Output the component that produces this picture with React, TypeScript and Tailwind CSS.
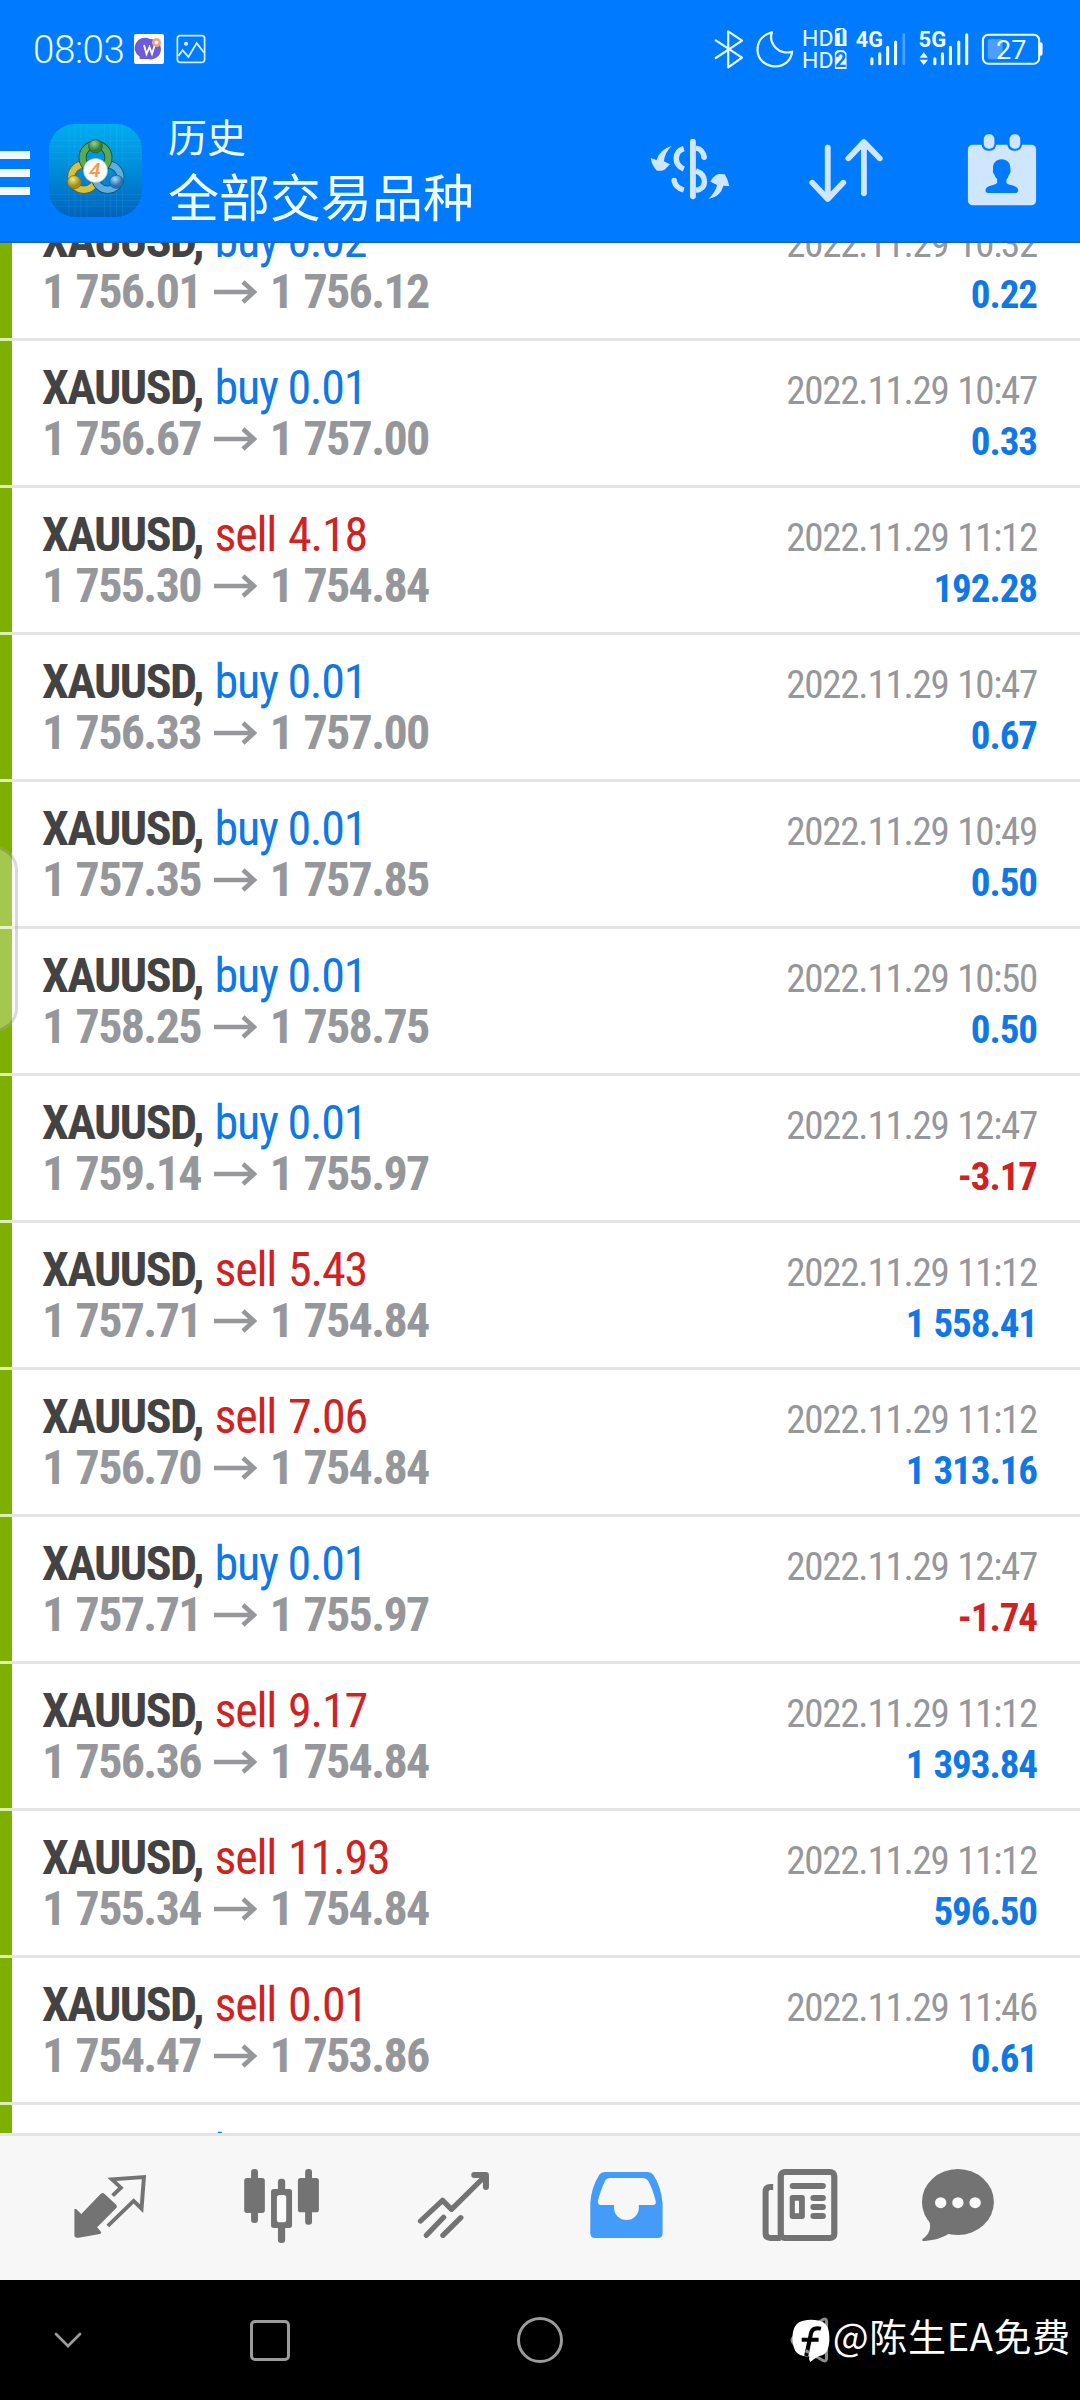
import React from "react";

type Trade = {
  side: "buy" | "sell";
  volume: string;
  open: string;
  close: string;
  time: string;
  profit: string;
};

const trades: Trade[] = [
  { side: "buy", volume: "0.02", open: "1 756.01", close: "1 756.12", time: "2022.11.29 10:32", profit: "0.22" },
  { side: "buy", volume: "0.01", open: "1 756.67", close: "1 757.00", time: "2022.11.29 10:47", profit: "0.33" },
  { side: "sell", volume: "4.18", open: "1 755.30", close: "1 754.84", time: "2022.11.29 11:12", profit: "192.28" },
  { side: "buy", volume: "0.01", open: "1 756.33", close: "1 757.00", time: "2022.11.29 10:47", profit: "0.67" },
  { side: "buy", volume: "0.01", open: "1 757.35", close: "1 757.85", time: "2022.11.29 10:49", profit: "0.50" },
  { side: "buy", volume: "0.01", open: "1 758.25", close: "1 758.75", time: "2022.11.29 10:50", profit: "0.50" },
  { side: "buy", volume: "0.01", open: "1 759.14", close: "1 755.97", time: "2022.11.29 12:47", profit: "-3.17" },
  { side: "sell", volume: "5.43", open: "1 757.71", close: "1 754.84", time: "2022.11.29 11:12", profit: "1 558.41" },
  { side: "sell", volume: "7.06", open: "1 756.70", close: "1 754.84", time: "2022.11.29 11:12", profit: "1 313.16" },
  { side: "buy", volume: "0.01", open: "1 757.71", close: "1 755.97", time: "2022.11.29 12:47", profit: "-1.74" },
  { side: "sell", volume: "9.17", open: "1 756.36", close: "1 754.84", time: "2022.11.29 11:12", profit: "1 393.84" },
  { side: "sell", volume: "11.93", open: "1 755.34", close: "1 754.84", time: "2022.11.29 11:12", profit: "596.50" },
  { side: "sell", volume: "0.01", open: "1 754.47", close: "1 753.86", time: "2022.11.29 11:46", profit: "0.61" },
  { side: "buy", volume: "0.01", open: "1 754.47", close: "1 753.86", time: "2022.11.29 11:46", profit: "0.61" },
];

function Icon({ box, className, children }: { box: string; className: string; children: React.ReactNode }) {
  return (
    <svg viewBox={box} preserveAspectRatio="none" className={"shrink-0 " + className} fill="none">
      {children}
    </svg>
  );
}

function StatusBar() {
  return (
    <div className="flex h-[98px] items-center justify-between pl-[33px] pr-[35px]">
      <div className="flex items-center">
        <span className="w-[101px] pt-[2px] text-[38.500px] leading-none font-[350] tracking-[-0.4px] whitespace-nowrap text-[#effaff] [font-stretch:92%]">
          08:03
        </span>
        <Icon box="0 0 30 30" className="h-[30px] w-[30px]">
          <rect width="30" height="30" rx="2" fill="#fff" />
          <path d="M16 5a10.2 10.2 0 1 1-2 20H7q-3 0-1-2A10.2 10.2 0 0 1 16 5Z" fill="#6d5bdc" />
          <circle cx="22.500" cy="8.500" r="4.500" fill="#e8a58c" />
          <circle cx="22.500" cy="8.500" r="1.800" fill="#fff" />
          <path d="M10 11l2.500 9 3-7 2.500 7 2.500-8" stroke="#fff" strokeWidth="1.800" />
        </Icon>
        <Icon box="511 102 87 89" className="ml-[12px] h-[30px] w-[30px]">
          <rect x="515" y="107" width="79" height="79" rx="8" stroke="#d6efff" strokeWidth="5" />
          <path d="M518 167l12-17 17 20 24-41 21 28" stroke="#d6efff" strokeWidth="5.500" />
          <circle cx="540" cy="131" r="6" fill="#d6efff" />
        </Icon>
      </div>
      <div className="flex items-center">
        <Icon box="500 81 110 132" className="h-[44px] w-[38px]">
          <path d="M508 121L584 173L544 202V94L584 122L508 174" stroke="#e6f8ff" strokeWidth="6.500" strokeLinecap="round" strokeLinejoin="round" />
        </Icon>
        <Icon box="610 81 140 132" className="h-[44px] w-[48px]">
          <path
            d="M671 97C640 105 629 128 629 150C629 180 654 199 681 199C707 199 727 182 730 155C715 160 695 158 682 143C670 130 666 112 671 97Z"
            stroke="#e6f8ff"
            strokeWidth="6.500"
            strokeLinejoin="round"
          />
        </Icon>
        <Icon box="750 81 155 132" className="h-[44px] w-[53px]">
          <g fontFamily="Roboto" fill="#effaff">
            <text x="759" y="137" fontSize="65" textLength="92" lengthAdjust="spacingAndGlyphs">HD</text>
            <text x="759" y="205" fontSize="65" textLength="92" lengthAdjust="spacingAndGlyphs">HD</text>
            <path d="M861 84h20l8 8v46h-34V90zM861 151h20l8 8v48h-34v-50z" />
          </g>
          <g fontFamily="Roboto" fontWeight="700" fill="#007aff" fontSize="58" textAnchor="middle">
            <text x="871" y="133">1</text>
            <text x="872" y="200">2</text>
          </g>
        </Icon>
        <Icon box="905 81 175 132" className="h-[44px] w-[60px]">
          <text x="916" y="141" fontFamily="Roboto" fontWeight="700" fontSize="64" fill="#effaff" textLength="79" lengthAdjust="spacingAndGlyphs">
            4G
          </text>
          <path d="M963 176v15M986 161v30M1009 142v49M1032 126v65" stroke="#effaff" strokeWidth="9" strokeLinecap="round" />
          <path d="M1056 104v87" stroke="#4da3ff" strokeWidth="8" strokeLinecap="round" />
        </Icon>
        <Icon box="1080 81 182 132" className="h-[44px] w-[63px]">
          <text x="1099" y="141" fontFamily="Roboto" fontWeight="700" fontSize="64" fill="#effaff" textLength="80" lengthAdjust="spacingAndGlyphs">
            5G
          </text>
          <path d="M1102 173l12-16 12 16zM1102 179l12 16 12-16z" fill="#effaff" />
          <path d="M1146 176v15M1168 161v30M1191 142v49M1215 126v65M1238 104v87" stroke="#effaff" strokeWidth="9" strokeLinecap="round" />
        </Icon>
        <Icon box="1262 81 203 132" className="h-[44px] w-[70px]">
          <rect x="1285" y="104" width="163" height="87" rx="16" stroke="#effaff" strokeWidth="6" />
          <path d="M1449 127h3q6 0 6 6v28q0 6-6 6h-3z" fill="#effaff" />
          <rect x="1299" y="117" width="43" height="61" rx="6" fill="#4d9fff" />
          <text x="1323" y="178" fontFamily="Roboto" fontSize="80" fill="#effaff" textLength="88" lengthAdjust="spacingAndGlyphs">
            27
          </text>
        </Icon>
      </div>
    </div>
  );
}

function AppLogo() {
  return (
    <Icon box="28 43 280 280" className="h-[93px] w-[93px]">
      <defs>
        <linearGradient id="tile" x1="0" y1="0" x2="0" y2="1">
          <stop offset="0" stopColor="#00aef0" />
          <stop offset="0.450" stopColor="#008fdc" />
          <stop offset="1" stopColor="#0063bd" />
        </linearGradient>
        <radialGradient id="green" cx="0.400" cy="0.300">
          <stop offset="0" stopColor="#9bd08a" />
          <stop offset="1" stopColor="#2e7d3c" />
        </radialGradient>
        <radialGradient id="gold" cx="0.400" cy="0.300">
          <stop offset="0" stopColor="#f4e98a" />
          <stop offset="1" stopColor="#a58c16" />
        </radialGradient>
        <radialGradient id="sky" cx="0.400" cy="0.300">
          <stop offset="0" stopColor="#a9dcf8" />
          <stop offset="1" stopColor="#2474b4" />
        </radialGradient>
      </defs>
      <rect x="28" y="43" width="280" height="280" rx="78" fill="url(#tile)" />
      <path
        d="M88 43v280M106 43v280M124 43v280M142 43v280M195 43v280M213 43v280M231 43v280M249 43v280M28 93h280M28 111h280M28 129h280M28 147h280M28 255h280M28 273h280M28 291h280"
        stroke="#5cc8ff"
        strokeOpacity="0.200"
        strokeWidth="2"
      />
      <circle cx="133" cy="203" r="38" stroke="#6b6412" strokeWidth="24" />
      <circle cx="133" cy="203" r="38" stroke="#d3c246" strokeWidth="19" />
      <circle cx="205" cy="203" r="38" stroke="#174f80" strokeWidth="24" />
      <circle cx="205" cy="203" r="38" stroke="#5eaede" strokeWidth="19" />
      <circle cx="168" cy="144" r="39" stroke="#1c5227" strokeWidth="24" />
      <circle cx="168" cy="144" r="39" stroke="#58a958" strokeWidth="19" />
      <ellipse cx="168" cy="110" rx="21" ry="20" fill="url(#green)" stroke="#245c30" strokeWidth="2" />
      <ellipse cx="104" cy="218" rx="21" ry="20" fill="url(#gold)" stroke="#71651a" strokeWidth="2" />
      <ellipse cx="231" cy="217" rx="21" ry="20" fill="url(#sky)" stroke="#205a8b" strokeWidth="2" />
      <circle cx="168" cy="183" r="36" fill="#fbfaf7" stroke="#b8c4c4" strokeWidth="2" />
      <text x="166" y="204" textAnchor="middle" fontFamily="Roboto" fontStyle="italic" fontWeight="500" fontSize="62" fill="#f0994f">
        4
      </text>
    </Icon>
  );
}

function Header() {
  return (
    <header className="h-[243px] shrink-0 border-b-2 border-[#0f68c9] bg-[#007aff]">
      <StatusBar />
      <div className="flex h-[143px]">
        <div className="flex w-[30px] flex-col gap-[10px] pt-[53px]">
          <div className="h-2 bg-[#f0fbff]" />
          <div className="h-2 bg-[#f0fbff]" />
          <div className="h-2 bg-[#f0fbff]" />
        </div>
        <div className="ml-[19px] pt-[26px]">
          <AppLogo />
        </div>
        <div className="ml-[26px] flex-1 pt-[14px] font-['Noto_Sans_CJK_SC',sans-serif] text-[#effcff]">
          <div className="text-[39px] leading-[46px]">历史</div>
          <div className="mt-[6px] text-[51px] leading-[62px] whitespace-nowrap">全部交易品种</div>
        </div>
        <div className="flex pt-[32px]">
          <Icon box="209.500 390 453 240" className="h-[80px] w-[156px]">
            <path
              d="M418 446Q397 452 396 475Q396 498 418 507M453 444Q474 448 477 472M390 542Q394 563 418 570M453 512Q478 522 478 545Q478 566 453 571"
              stroke="#cfe6ff"
              strokeWidth="16"
            />
            <path d="M444.500 425v164" stroke="#cfe6ff" strokeWidth="17" strokeLinecap="round" />
            <circle cx="477" cy="472" r="8" fill="#cfe6ff" />
            <circle cx="390" cy="541" r="8" fill="#cfe6ff" />
            <path
              d="M383 438Q364 455 360 484L378 493L362 509Q350 514 340 512Q325 497 322 474L339 480Q348 448 383 438ZM489 597Q509 578 515 555L495 545Q505 525 520 522L537 523Q547 540 550 558L533 557Q525 590 489 597Z"
              fill="#cfe6ff"
            />
          </Icon>
          <Icon box="662.500 390 453 240" className="h-[80px] w-[156px]">
            <path
              d="M836 443V596M791 548L836 597L881 548M941 580V427M896 475L941 426L987 475"
              stroke="#cfe6ff"
              strokeWidth="17"
              strokeLinecap="round"
              strokeLinejoin="round"
            />
          </Icon>
          <Icon box="1115.500 390 453 240" className="h-[80px] w-[156px]">
            <rect x="1243" y="434" width="198" height="182" rx="14" fill="#cfe6ff" />
            <rect x="1283" y="397" width="42" height="55" rx="18" fill="#007aff" />
            <rect x="1358" y="397" width="42" height="55" rx="18" fill="#007aff" />
            <rect x="1289" y="403" width="31" height="43" rx="14" fill="#cfe6ff" />
            <rect x="1364" y="403" width="31" height="43" rx="14" fill="#cfe6ff" />
            <path
              d="M1341 478C1358 478 1368 492 1366 508C1368 512 1367 521 1362 524Q1360 534 1355 538V549Q1358 554 1376 557Q1389 561 1389 571Q1389 579 1380 579H1302Q1294 579 1294 571Q1295 560 1308 557Q1326 553 1328 548V538Q1322 533 1320 524Q1314 520 1316 508C1314 491 1324 478 1341 478Z"
              fill="#007aff"
            />
          </Icon>
        </div>
      </div>
    </header>
  );
}

function TradeRow({ trade }: { trade: Trade }) {
  return (
    <li className="flex h-[147px] shrink-0">
      <div className="w-[12px] border-b-3 border-[#dcefb4] bg-[#7db000]" />
      <div className="flex flex-1 justify-between border-b-3 border-[#e4e4e4] pr-[43px] pl-[30px] whitespace-nowrap [font-stretch:75%]">
        <div className="pt-[21px] text-[48px] leading-[51px]">
          <div>
            <span className="mr-[2px] font-bold tracking-[-1.55px] text-[#434343]">XAUUSD, </span>
            <span
              className={
                trade.side === "buy"
                  ? "tracking-[-1.25px] text-[#0f78e6]"
                  : "tracking-[-1.2px] text-[#cf2222] [word-spacing:2px]"
              }
            >
              {trade.side} {trade.volume}
            </span>
          </div>
          <div className="flex items-center font-bold tracking-[-1.65px] text-[#96979a] [word-spacing:1.5px]">
            <span>{trade.open}</span>
            <svg viewBox="0 0 44 24" className="mr-[12px] ml-[13px] h-[24px] w-[44px]" fill="none" stroke="#96979a" strokeWidth="4.500">
              <path d="M0 12H40M29 2l11 10-11 10" />
            </svg>
            <span>{trade.close}</span>
          </div>
        </div>
        <div className="pt-[25px] text-right text-[39px] leading-[51px] [word-spacing:1px]">
          <div className="tracking-[-1.25px] text-[#96979a]">{trade.time}</div>
          <div
            className={
              trade.profit.startsWith("-")
                ? "font-bold tracking-[-1.05px] text-[#cf2222]"
                : "font-bold tracking-[-1.05px] text-[#0f78e6]"
            }
          >
            {trade.profit}
          </div>
        </div>
      </div>
    </li>
  );
}

function TabBar() {
  return (
    <nav className="flex h-[147px] shrink-0 items-center justify-between border-t-3 border-[#e4e4e4] bg-[#f7f7f7] px-[62px]">
      <Icon box="180 240 278.800 288" className="h-[96px] w-[96px]">
        <path
          d="M292 342Q298 336 304 342L338 375Q342 380 337 385L282 442L294 457Q295 461 290 462L228 473Q216 475 216 466V387H221L236 402Z"
          fill="#737373"
        />
        <path d="M327 347L351 323L325 298L418 291L411 386L388 363L313 438" stroke="#737373" strokeWidth="11.500" />
      </Icon>
      <Icon box="679.400 240 278.800 288" className="h-[96px] w-[96px]">
        <g fill="#737373">
          <rect x="729" y="267" width="20" height="162" rx="9" />
          <rect x="709" y="294" width="60" height="105" rx="8" />
          <rect x="807" y="296" width="21" height="193" rx="9" />
          <rect x="787" y="327" width="61" height="117" rx="8" />
          <rect x="886" y="267" width="20" height="167" rx="9" />
          <rect x="865" y="294" width="61" height="103" rx="8" />
        </g>
        <rect x="804" y="345" width="27" height="82" rx="8" fill="#fafafa" />
      </Icon>
      <Icon box="1178.800 240 278.800 288" className="h-[96px] w-[96px]">
        <path
          d="M1221 423L1285 361L1311 388L1409 288M1288 412L1238 466M1338 413L1286 466"
          stroke="#737373"
          strokeWidth="15.500"
          strokeLinecap="round"
          strokeLinejoin="round"
        />
        <path d="M1377 285H1411V321" stroke="#737373" strokeWidth="17.500" strokeLinecap="round" strokeLinejoin="round" />
      </Icon>
      <Icon box="110.300 240 278.800 288" className="h-[96px] w-[96px]">
        <path
          fillRule="evenodd"
          d="M188 276H313Q323 276 329 284Q352 320 356 370V460Q356 474 342 474H160Q146 474 146 460V370Q148 325 172 284Q178 276 188 276ZM204 294Q193 294 189 302Q174 335 168 364Q167 375 177 375H215V384A36 36 0 0 0 287 384V375H328Q338 375 336 364Q328 328 314 302Q309 294 299 294Z"
          fill="#449bf8"
        />
      </Icon>
      <Icon box="609.700 240 278.800 288" className="h-[96px] w-[96px]">
        <path d="M677 321H669Q655 321 655 335V460Q655 474 669 474H699" stroke="#737373" strokeWidth="17.500" />
        <rect x="699" y="276" width="155.500" height="198" rx="12" stroke="#737373" strokeWidth="18" />
        <g fill="#737373">
          <rect x="725" y="309" width="105" height="18" rx="9" />
          <path fillRule="evenodd" d="M733 345h28q8 0 8 8v56q0 8-8 8h-28q-8 0-8-8v-56q0-8 8-8zM740 362v38h12v-38z" />
          <rect x="785" y="345" width="45" height="18" rx="9" />
          <rect x="785" y="372" width="45" height="18" rx="9" />
          <rect x="785" y="399" width="45" height="18" rx="9" />
        </g>
      </Icon>
      <Icon box="1109.200 240 278.800 288" className="h-[96px] w-[96px] overflow-visible">
        <ellipse cx="1213.500" cy="366" rx="104.500" ry="99" fill="#737373" />
        <path d="M1129 420Q1142 454 1111 477Q1106 484 1118 483Q1160 480 1190 460Z" fill="#737373" />
        <g fill="#fafafa">
          <circle cx="1163.500" cy="368" r="16.500" />
          <circle cx="1213.500" cy="368" r="16.500" />
          <circle cx="1263.500" cy="368" r="16.500" />
        </g>
      </Icon>
    </nav>
  );
}

function SystemBar() {
  return (
    <div className="flex h-[120px] shrink-0 items-center bg-black">
      <div className="flex w-[136px] justify-center">
        <svg viewBox="0 0 28 16" className="h-[16px] w-[28px]" fill="none" stroke="#9b9b9b" strokeWidth="2.700" strokeLinecap="round">
          <path d="M2 2l12 12L26 2" />
        </svg>
      </div>
      <div className="flex w-[268px] justify-center">
        <div className="h-[41px] w-[40px] rounded-[5px] border-3 border-[#9b9b9b]" />
      </div>
      <div className="flex w-[272px] justify-center">
        <div className="h-[46px] w-[46px] rounded-full border-3 border-[#9b9b9b]" />
      </div>
      <div className="flex flex-1 items-center justify-end pr-[9px] pb-[1px]">
        <Icon box="720 708 125 144" className="h-[48px] w-[43px]">
          <path d="M820 718Q829 714 829 726V834Q829 846 820 842L733 790Q725 780 733 772Z" stroke="#8c8c8c" strokeWidth="9" />
          <path
            d="M762 722Q784 717 808 722Q832 727 836 756Q840 786 833 806Q829 824 806 829Q794 836 782 846Q776 838 779 829Q750 831 738 812Q730 796 730 772Q731 728 762 722Z"
            fill="#fff"
          />
          <path d="M813 746Q788 740 784 760L770 828M757 779H806" stroke="#000" strokeWidth="12" />
          <path d="M768 812l11 6" stroke="#8c8c8c" strokeWidth="9" />
        </Icon>
        <span className="ml-[1px] pb-[9px] font-['Noto_Sans_CJK_SC',sans-serif] text-[38px] leading-[50px] tracking-[0.7px] whitespace-nowrap text-white">
          @陈生EA免费
        </span>
      </div>
    </div>
  );
}

export default function App() {
  return (
    <div className="flex h-[2400px] w-[1080px] flex-col overflow-hidden bg-white font-[Roboto,'Noto_Sans_CJK_SC',sans-serif]">
      <Header />
      <main className="relative h-[1890px] shrink-0 overflow-hidden">
        <ul className="mt-[-49px] flex flex-col">
          {trades.map((trade, index) => (
            <TradeRow key={index} trade={trade} />
          ))}
        </ul>
        <div className="absolute top-[603px] -left-[30px] h-[186px] w-[48px] rounded-[26px] border-3 border-black/15 bg-white/30" />
      </main>
      <TabBar />
      <SystemBar />
    </div>
  );
}
